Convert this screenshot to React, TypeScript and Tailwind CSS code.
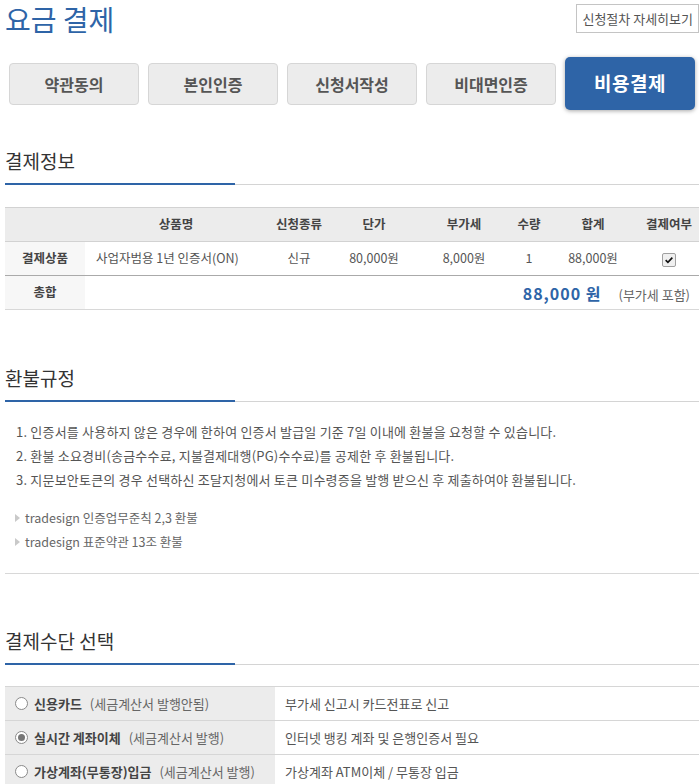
import React, { useState } from "react";

const steps = ["약관동의", "본인인증", "신청서작성", "비대면인증", "비용결제"];

const refundRules = [
  "1. 인증서를 사용하지 않은 경우에 한하여 인증서 발급일 기준 7일 이내에 환불을 요청할 수 있습니다.",
  "2. 환불 소요경비(송금수수료, 지불결제대행(PG)수수료)를 공제한 후 환불됩니다.",
  "3. 지문보안토큰의 경우 선택하신 조달지청에서 토큰 미수령증을 발행 받으신 후 제출하여야 환불됩니다.",
];

const refundLinks = ["tradesign 인증업무준칙 2,3 환불", "tradesign 표준약관 13조 환불"];

const payMethods = [
  { id: "card", label: "신용카드", note: "(세금계산서 발행안됨)", desc: "부가세 신고시 카드전표로 신고" },
  { id: "bank", label: "실시간 계좌이체", note: "(세금계산서 발행)", desc: "인터넷 뱅킹 계좌 및 은행인증서 필요" },
  { id: "vbank", label: "가상계좌(무통장)입금", note: "(세금계산서 발행)", desc: "가상계좌 ATM이체 / 무통장 입금" },
];

function SectionTitle({ title }: { title: string }) {
  return (
    <div>
      <h2 className="text-[19px] leading-[24px] text-[#333] pb-[10px]">{title}</h2>
      <div className="flex items-end">
        <div className="w-[230px] h-[2px] bg-[#2e64a7]" />
        <div className="flex-1 h-px bg-[#d4d4d4]" />
      </div>
    </div>
  );
}

function Radio({ checked }: { checked: boolean }) {
  return (
    <span className="w-[13px] h-[13px] rounded-full border border-[#8a8a8a] bg-white flex items-center justify-center shrink-0">
      {checked && <span className="w-[7px] h-[7px] rounded-full bg-[#777]" />}
    </span>
  );
}

export default function App() {
  const [method, setMethod] = useState("bank");

  return (
    <div className="min-h-screen bg-white pl-[5px] text-[#444] font-['Noto_Sans_CJK_KR','Noto_Sans',sans-serif]">
      {/* Header */}
      <div className="flex justify-between items-start">
        <h1 className="text-[28px] leading-[36px] text-[#2e64a7] pt-[1px]">요금 결제</h1>
        <button className="mt-[4px] h-[29px] px-[5px] border border-[#c4c4c4] bg-white text-[13px] text-[#555]">
          신청절차 자세히보기
        </button>
      </div>

      {/* Steps */}
      <div className="flex items-center gap-[9px] pl-[4px] mt-[20px] h-[53px]">
        {steps.map((s, i) =>
          i === steps.length - 1 ? (
            <div
              key={s}
              className="w-[130px] h-[53px] rounded-[5px] bg-[#2e64a7] shadow-[0_1px_4px_rgba(0,0,0,0.35)] flex items-center justify-center text-white text-[19px] font-bold tracking-[0.5px]"
            >
              {s}
            </div>
          ) : (
            <div
              key={s}
              className="w-[130px] h-[42px] rounded-[4px] bg-[#ececec] border border-[#d6d6d6] flex items-center justify-center text-[#555] text-[16px] font-bold"
            >
              {s}
            </div>
          )
        )}
      </div>

      {/* 결제정보 */}
      <div className="mt-[39px]">
        <SectionTitle title="결제정보" />
      </div>

      <table className="mt-[22px] w-[694px] table-fixed border-collapse text-[12.5px]">
        <colgroup>
          <col className="w-[80px]" />
          <col className="w-[182px]" />
          <col className="w-[64px]" />
          <col className="w-[86px]" />
          <col className="w-[94px]" />
          <col className="w-[36px]" />
          <col className="w-[92px]" />
          <col className="w-[60px]" />
        </colgroup>
        <thead>
          <tr className="h-[34px] bg-[#ececec] border-t border-b border-[#d2d2d2] font-bold text-[#444]">
            <th></th>
            <th>상품명</th>
            <th>신청종류</th>
            <th>단가</th>
            <th>부가세</th>
            <th>수량</th>
            <th>합계</th>
            <th>결제여부</th>
          </tr>
        </thead>
        <tbody>
          <tr className="h-[34px] border-b border-[#aaa] text-[#555] text-center">
            <td className="bg-[#f7f7f7] font-bold text-[#444]">결제상품</td>
            <td className="text-left pl-[11px]">사업자범용 1년 인증서(ON)</td>
            <td>신규</td>
            <td>80,000원</td>
            <td>8,000원</td>
            <td>1</td>
            <td>88,000원</td>
            <td>
              <span className="inline-flex w-[14px] h-[14px] border border-[#a0a0a0] rounded-[2px] bg-[#f0f0f0] items-center justify-center align-middle">
                <svg viewBox="0 0 12 12" className="w-[10px] h-[10px]">
                  <path d="M2 6.2 L4.7 8.8 L10 3.2" fill="none" stroke="#111" strokeWidth="2" />
                </svg>
              </span>
            </td>
          </tr>
          <tr className="h-[34px] border-b border-[#d8d8d8]">
            <td className="bg-[#f7f7f7] font-bold text-center text-[#444]">총합</td>
            <td colSpan={7} className="text-right pr-[9px]">
              <span className="text-[16px] font-bold text-[#2e64a7] tracking-[1px]">88,000 원</span>
              <span className="ml-[17px] text-[13px] text-[#666]">(부가세 포함)</span>
            </td>
          </tr>
        </tbody>
      </table>

      {/* 환불규정 */}
      <div className="mt-[56px]">
        <SectionTitle title="환불규정" />
      </div>

      <ul className="mt-[18px] pl-[11px] text-[13px] tracking-[0.2px] leading-[24px] text-[#555]">
        {refundRules.map((r) => (
          <li key={r}>{r}</li>
        ))}
      </ul>

      <ul className="mt-[14px] pl-[10px] text-[12.5px] leading-[24px] text-[#666]">
        {refundLinks.map((l) => (
          <li key={l} className="flex items-center gap-[5px]">
            <span className="w-0 h-0 border-y-[4px] border-y-transparent border-l-[5px] border-l-[#c9c9c9]" />
            <a href="#" className="text-[#666]">{l}</a>
          </li>
        ))}
      </ul>

      <div className="mt-[19px] h-px bg-[#d8d8d8]" />

      {/* 결제수단 선택 */}
      <div className="mt-[55px]">
        <SectionTitle title="결제수단 선택" />
      </div>

      <div className="mt-[21px] border-t border-[#d6d6d6] text-[13px]">
        {payMethods.map((m) => (
          <label key={m.id} className="flex h-[34px] border-b border-[#d6d6d6] cursor-pointer" onClick={() => setMethod(m.id)}>
            <div className="w-[270px] bg-[#ececec] flex items-center pl-[10px] gap-[6px]">
              <Radio checked={method === m.id} />
              <span className="font-bold text-[#444]">{m.label}</span>
              <span className="text-[#666] ml-[2px]">{m.note}</span>
            </div>
            <div className="flex-1 flex items-center pl-[10px] text-[#555]">{m.desc}</div>
          </label>
        ))}
      </div>
    </div>
  );
}
